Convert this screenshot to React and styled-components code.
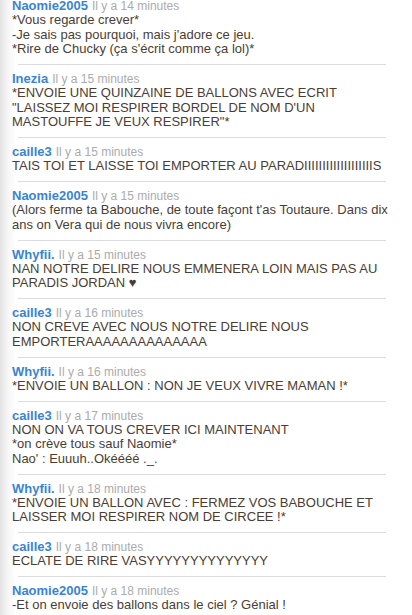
import React from "react";
import styled, { createGlobalStyle } from "styled-components";

const Global = createGlobalStyle`
  html, body { margin: 0; padding: 0; }
  body {
    background: linear-gradient(to right, #e3e3e3 0px, #f6f6f6 8px, #ffffff 16px) fixed;
    min-height: 615px;
    font-family: "Liberation Sans", Arial, sans-serif;
    overflow: hidden;
  }
`;

const Feed = styled.div`
  display: flex;
  flex-direction: column;
  margin-top: -8px;
`;

const Message = styled.div`
  padding: 6px 16px 7.5px 12px;
`;

const Header = styled.div`
  display: flex;
  align-items: baseline;
  gap: 4px;
  height: 15px;
  line-height: 15px;
  font-size: 13px;
  white-space: nowrap;
`;

const Author = styled.span`
  font-weight: bold;
  font-size: 13px;
  color: #3a84d2;
`;

const Time = styled.span`
  font-size: 12px;
  color: #ababab;
`;

const Body = styled.div`
  font-size: 13px;
  line-height: 14.5px;
  color: #4b3d33;
`;

const Line = styled.div`
  min-height: 14.5px;
`;

const Separator = styled.div`
  height: 1px;
  margin: 0 26px 0 18px;
  background: #dcdcdc;
`;

const messages = [
  { a: "Naomie2005", t: 14, lines: ["*Vous regarde crever*", "-Je sais pas pourquoi, mais j'adore ce jeu.", "*Rire de Chucky (ça s'écrit comme ça lol)*"] },
  { a: "Inezia", t: 15, lines: ["*ENVOIE UNE QUINZAINE DE BALLONS AVEC ECRIT \"LAISSEZ MOI RESPIRER BORDEL DE NOM D'UN MASTOUFFE JE VEUX RESPIRER\"*"] },
  { a: "caille3", t: 15, lines: ["TAIS TOI ET LAISSE TOI EMPORTER AU PARAD" + "I".repeat(19) + "S"] },
  { a: "Naomie2005", t: 15, lines: ["(Alors ferme ta Babouche, de toute façont t'as Toutaure. Dans dix ans on Vera qui de nous vivra encore)"] },
  { a: "Whyfii.", t: 15, lines: ["NAN NOTRE DELIRE NOUS EMMENERA LOIN MAIS PAS AU PARADIS JORDAN ♥"] },
  { a: "caille3", t: 16, lines: ["NON CREVE AVEC NOUS NOTRE DELIRE NOUS EMPORTER" + "A".repeat(14)] },
  { a: "Whyfii.", t: 16, lines: ["*ENVOIE UN BALLON : NON JE VEUX VIVRE MAMAN !*"] },
  { a: "caille3", t: 17, lines: ["NON ON VA TOUS CREVER ICI MAINTENANT", "*on crève tous sauf Naomie*", "Nao' : Euuuh..Okéééé ._."] },
  { a: "Whyfii.", t: 18, lines: ["*ENVOIE UN BALLON AVEC : FERMEZ VOS BABOUCHE ET LAISSER MOI RESPIRER NOM DE CIRCEE !*"] },
  { a: "caille3", t: 18, lines: ["ECLATE DE RIRE VASYYYYYYYYYYYYYY"] },
  { a: "Naomie2005", t: 18, lines: ["-Et on envoie des ballons dans le ciel ? Génial !"] },
];

export default function App() {
  return (
    <>
      <Global />
      <Feed>
        {messages.map((m, i) => (
          <React.Fragment key={i}>
            {i > 0 && <Separator />}
            <Message>
              <Header>
                <Author>{m.a}</Author>
                <Time>Il y a {m.t} minutes</Time>
              </Header>
              <Body>
                {m.lines.map((l, j) => (
                  <Line key={j}>{l}</Line>
                ))}
              </Body>
            </Message>
          </React.Fragment>
        ))}
      </Feed>
    </>
  );
}
